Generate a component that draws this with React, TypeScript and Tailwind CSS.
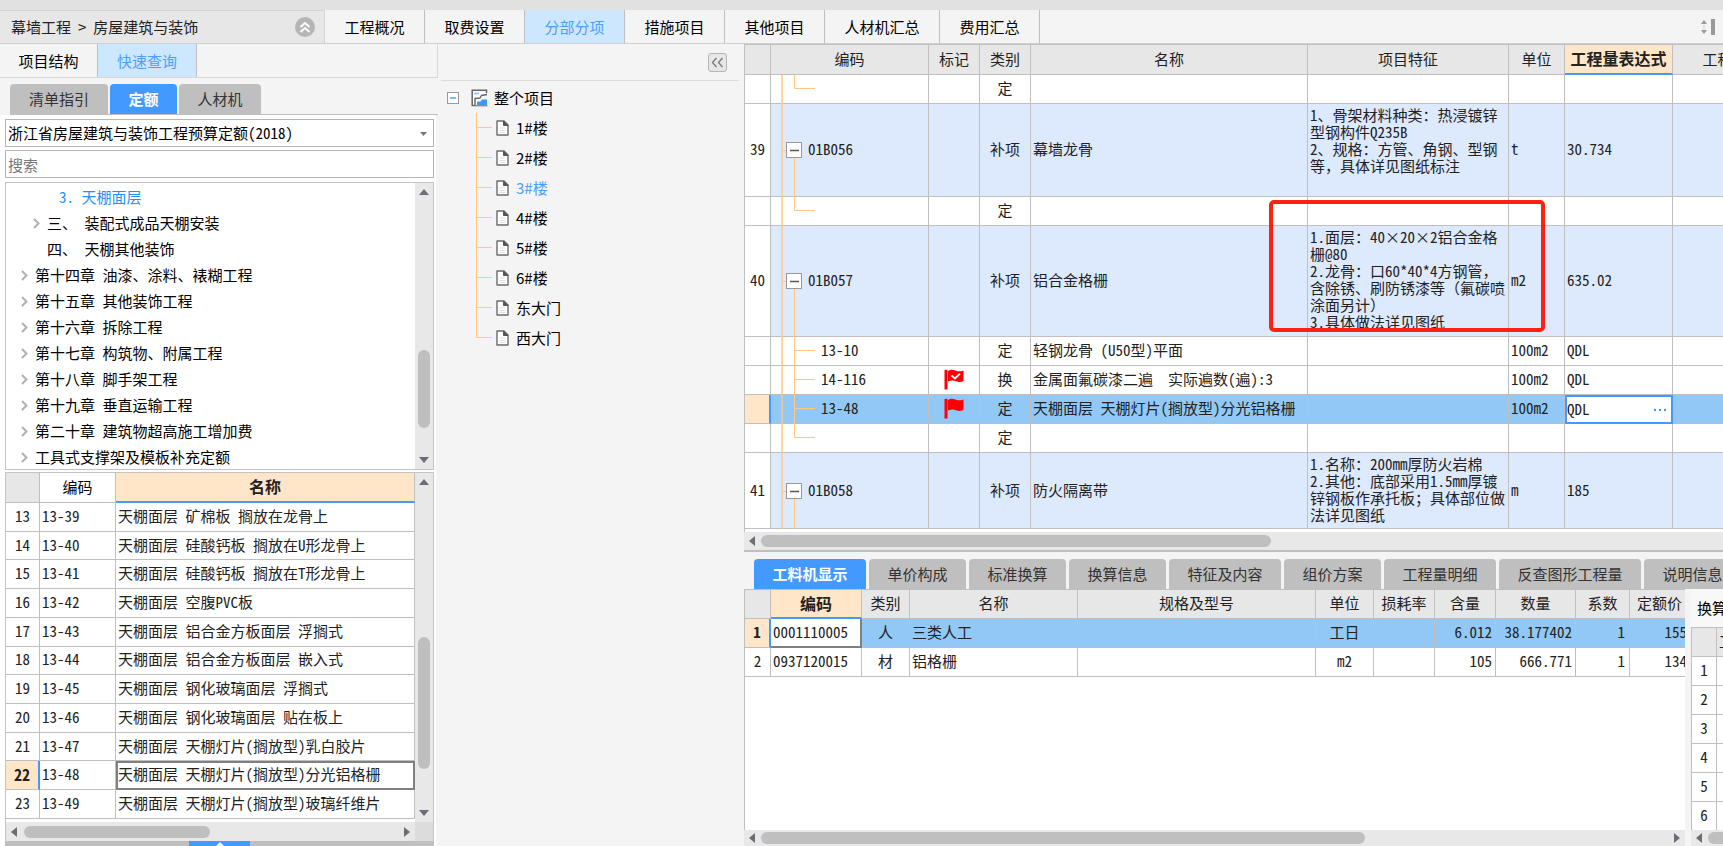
import React, { useState } from 'react';

const TOP_TABS = [
  { label: '工程概况', width: 'w-[100px]' },
  { label: '取费设置', width: 'w-[100px]' },
  { label: '分部分项', width: 'w-[100px]' },
  { label: '措施项目', width: 'w-[100px]' },
  { label: '其他项目', width: 'w-[100px]' },
  { label: '人材机汇总', width: 'w-[115px]' },
  { label: '费用汇总', width: 'w-[100px]' },
];

const QUERY_TABS = [
  { label: '清单指引', width: 'w-[98px]' },
  { label: '定额', width: 'w-[67px]' },
  { label: '人材机', width: 'w-[82px]' },
];

const CHAPTERS = [
  { label: '3. 天棚面层', indent: 'pl-[53px]', arrow: false, active: true },
  { label: '三、 装配式成品天棚安装', indent: 'pl-[27px]', arrow: true },
  { label: '四、 天棚其他装饰', indent: 'pl-[41px]', arrow: false },
  { label: '第十四章 油漆、涂料、裱糊工程', indent: 'pl-[15px]', arrow: true },
  { label: '第十五章 其他装饰工程', indent: 'pl-[15px]', arrow: true },
  { label: '第十六章 拆除工程', indent: 'pl-[15px]', arrow: true },
  { label: '第十七章 构筑物、附属工程', indent: 'pl-[15px]', arrow: true },
  { label: '第十八章 脚手架工程', indent: 'pl-[15px]', arrow: true },
  { label: '第十九章 垂直运输工程', indent: 'pl-[15px]', arrow: true },
  { label: '第二十章 建筑物超高施工增加费', indent: 'pl-[15px]', arrow: true },
  { label: '工具式支撑架及模板补充定额', indent: 'pl-[15px]', arrow: true },
];

const QUOTAS = [
  { no: 13, code: '13-39', name: '天棚面层 矿棉板 搁放在龙骨上' },
  { no: 14, code: '13-40', name: '天棚面层 硅酸钙板 搁放在U形龙骨上' },
  { no: 15, code: '13-41', name: '天棚面层 硅酸钙板 搁放在T形龙骨上' },
  { no: 16, code: '13-42', name: '天棚面层 空腹PVC板' },
  { no: 17, code: '13-43', name: '天棚面层 铝合金方板面层 浮搁式' },
  { no: 18, code: '13-44', name: '天棚面层 铝合金方板面层 嵌入式' },
  { no: 19, code: '13-45', name: '天棚面层 钢化玻璃面层 浮搁式' },
  { no: 20, code: '13-46', name: '天棚面层 钢化玻璃面层 贴在板上' },
  { no: 21, code: '13-47', name: '天棚面层 天棚灯片(搁放型)乳白胶片' },
  { no: 22, code: '13-48', name: '天棚面层 天棚灯片(搁放型)分光铝格栅' },
  { no: 23, code: '13-49', name: '天棚面层 天棚灯片(搁放型)玻璃纤维片' },
];

const BUILDINGS = ['1#楼', '2#楼', '3#楼', '4#楼', '5#楼', '6#楼', '东大门', '西大门'];

type RowKind = 'group' | 'child' | 'last';

interface BillRow {
  kind: RowKind;
  height: number;
  no?: string;
  code?: string;
  flag?: 'plain' | 'check';
  type: string;
  name?: string;
  features?: string[];
  unit?: string;
  expr?: string;
  selected?: boolean;
}

const BILL_ROWS: BillRow[] = [
  { kind: 'last', height: 29, type: '定' },
  {
    kind: 'group', height: 93, no: '39', code: '01B056', type: '补项', name: '幕墙龙骨', unit: 't', expr: '30.734',
    features: ['1、骨架材料种类：热浸镀锌', '型钢构件Q235B', '2、规格：方管、角钢、型钢', '等，具体详见图纸标注'],
  },
  { kind: 'last', height: 29, type: '定' },
  {
    kind: 'group', height: 111, no: '40', code: '01B057', type: '补项', name: '铝合金格栅', unit: 'm2', expr: '635.02',
    features: ['1.面层：40×20×2铝合金格', '栅@80', '2.龙骨：口60*40*4方钢管，', '含除锈、刷防锈漆等（氟碳喷', '涂面另计）', '3.具体做法详见图纸'],
  },
  { kind: 'child', height: 29, code: '13-10', type: '定', name: '轻钢龙骨 (U50型)平面', unit: '100m2', expr: 'QDL' },
  { kind: 'child', height: 29, code: '14-116', flag: 'check', type: '换', name: '金属面氟碳漆二遍  实际遍数(遍):3', unit: '100m2', expr: 'QDL' },
  { kind: 'child', height: 29, code: '13-48', flag: 'plain', type: '定', name: '天棚面层 天棚灯片(搁放型)分光铝格栅', unit: '100m2', expr: 'QDL', selected: true },
  { kind: 'last', height: 29, type: '定' },
  {
    kind: 'group', height: 76, no: '41', code: '01B058', type: '补项', name: '防火隔离带', unit: 'm', expr: '185',
    features: ['1.名称：200mm厚防火岩棉', '2.其他：底部采用1.5mm厚镀', '锌钢板作承托板；具体部位做', '法详见图纸'],
  },
];

const DETAIL_TABS = [
  { label: '工料机显示', width: 'w-[112px]' },
  { label: '单价构成', width: 'w-[97px]' },
  { label: '标准换算', width: 'w-[97px]' },
  { label: '换算信息', width: 'w-[97px]' },
  { label: '特征及内容', width: 'w-[112px]' },
  { label: '组价方案', width: 'w-[97px]' },
  { label: '工程量明细', width: 'w-[112px]' },
  { label: '反查图形工程量', width: 'w-[142px]' },
  { label: '说明信息', width: 'w-[97px]' },
];

const RESOURCES = [
  { no: '1', code: '0001110005', type: '人', name: '三类人工', unit: '工日', content: '6.012', amount: '38.177402', factor: '1', price: '155' },
  { no: '2', code: '0937120015', type: '材', name: '铝格栅', unit: 'm2', content: '105', amount: '666.771', factor: '1', price: '134' },
];

const HEAD = 'border-r border-b border-[#bfbfbf] bg-[#e7e7e7] font-normal p-0 pb-[2px] text-center whitespace-nowrap';
const HEAD_ACTIVE = 'border-r border-r-[#bfbfbf] border-b-2 border-b-[#4499ff] bg-[#ffe6c8] font-bold text-base leading-5 p-0 pb-[2px] text-center whitespace-nowrap';
const CELL = 'border-r border-b border-[#bfbfbf] p-0 pb-[2px] whitespace-pre overflow-hidden';

const Arrow: React.FC<{ dir: 'up' | 'down' | 'left' | 'right' }> = ({ dir }) => {
  const points = {
    up: '0,6 5,0 10,6',
    down: '0,0 5,6 10,0',
    left: '6,0 0,5 6,10',
    right: '0,0 6,5 0,10',
  };
  const vertical = dir === 'up' || dir === 'down';
  return (
    <svg width={vertical ? 10 : 6} height={vertical ? 6 : 10} className="shrink-0" aria-hidden="true">
      <polygon points={points[dir]} fill="#6d6d75" />
    </svg>
  );
};

const VScroll: React.FC<{ thumb: string }> = ({ thumb }) => (
  <div className="w-[18px] shrink-0 bg-[#e8e8e8] flex flex-col items-center justify-between py-[6px]">
    <Arrow dir="up" />
    <div className="flex-1 w-3">
      <div className={`rounded-full bg-[#bfbfbf] ${thumb}`} />
    </div>
    <Arrow dir="down" />
  </div>
);

const HScroll: React.FC<{ thumb: string; end?: boolean; className?: string }> = ({ thumb, end = true, className = '' }) => (
  <div className={`bg-[#e8e8e8] flex items-center px-[5px] gap-[6px] overflow-hidden ${className}`}>
    <Arrow dir="left" />
    <div className="flex-1 min-w-0">
      <div className={`h-3 rounded-full bg-[#bfbfbf] ${thumb}`} />
    </div>
    {end && <Arrow dir="right" />}
  </div>
);

const DocIcon = () => (
  <svg width="13" height="16" viewBox="0 0 13 16" className="shrink-0" aria-hidden="true">
    <path d="M1 1h7l4 4v10H1z" fill="#fff" stroke="#6b6b6b" strokeWidth="1.4" strokeLinejoin="round" />
    <path d="M7.5 1v4.5H12z" fill="#555" stroke="#555" strokeWidth="1" strokeLinejoin="round" />
    <path d="M3.5 8h6M3.5 10.5h6M3.5 12.5h6" stroke="#ddd" />
  </svg>
);

const ProjectIcon = () => (
  <svg width="17" height="18" viewBox="0 0 17 18" className="shrink-0" aria-hidden="true">
    <path d="M15.500 4V1.200H1.200V16.500H4" fill="#fff" stroke="#666" strokeWidth="1.5" />
    <path d="M3 4.500h5" stroke="#9cc8ff" strokeWidth="2" />
    <path d="M4 16.500V9.500l5-.5 1.500-2.500 5.500-1" fill="none" stroke="#666" strokeWidth="1.4" />
    <path d="M6 16v-3.500h3.500l1.500-2h5V16z" fill="#3d96ff" />
    <path d="M4 16.800h12.500" stroke="#666" strokeWidth="1" />
  </svg>
);

const FlagIcon: React.FC<{ checked: boolean }> = ({ checked }) => (
  <svg width="20" height="21" viewBox="0 0 20 21" className="mx-auto" aria-hidden="true">
    <path d="M0.500 1.500c0-1 3-1 3 0V20.500H0.500z" fill="#fb0007" />
    <path d="M4 2c3-2 5-1.500 8-.3 2.500 1 5 .8 7.500-.2V12c-3 1.500-5 1.200-7.500.2-2.500-1-5-1-8 .4z" fill="#fb0007" />
    {checked && <path d="M7.500 6.500l3.500 3 5-4.800" fill="none" stroke="#fff" strokeWidth="1.800" />}
  </svg>
);

// connector lines of the bill tree, drawn row by row
const Branch: React.FC<{ kind: RowKind; height: number }> = ({ kind, height }) => {
  const mid = Math.floor(height / 2);
  return (
    <svg width={kind === 'group' ? 37 : 50} height={height - 1} className="shrink-0 overflow-visible" aria-hidden="true">
      <g stroke="#ffc982" fill="none">
        <path d={`M11 0V${height}`} strokeWidth="1.500" />
        {kind === 'group' && <path d={`M11 ${mid + 0.5}H16M23.500 ${mid + 8}V${height}`} />}
        {kind === 'child' && <path d={`M23.500 0V${height}M23.500 ${mid - 0.5}H44`} />}
        {kind === 'last' && <path d={`M23.500 0V${mid - 0.5}H44`} />}
      </g>
      {kind === 'group' && (
        <g>
          <rect x="15.500" y={mid - 7.5} width="15" height="15" fill="#fff" stroke="#999" />
          <path d={`M19 ${mid + 0.5}h9`} stroke="#555" strokeWidth="1.500" />
        </g>
      )}
    </svg>
  );
};

// letters and digits are half width here, full-width punctuation keeps its own width
const FeatureText: React.FC<{ lines: string[] }> = ({ lines }) => (
  <>
    {lines.join('\n').split(/([，（）])/).map((part, index) =>
      index % 2 === 1 ? <span key={index} className="[font-feature-settings:normal]">{part}</span> : part
    )}
  </>
);

const TopBar = () => {
  const [active, setActive] = useState('分部分项');
  return (
    <header className="flex h-[34px] shrink-0 bg-[#f4f4f4] border-b border-[#cfcfcf]">
      <div className="w-[325px] shrink-0 bg-[#e7e7e7] border-t border-r border-[#d4d4d4] flex items-center justify-between pl-[11px] pr-[9px]">
        <nav className="flex gap-[7px] text-[#222]">
          <span>幕墙工程</span>
          <span>&gt;</span>
          <span>房屋建筑与装饰</span>
        </nav>
        <button aria-label="收起" className="size-5 rounded-full bg-[#b5b5b5] flex items-center justify-center">
          <svg width="12" height="12" viewBox="0 0 12 12" fill="none" stroke="#fff" strokeWidth="1.800">
            <path d="M1.500 6l4.500-4 4.500 4M1.500 11l4.500-4 4.500 4" />
          </svg>
        </button>
      </div>
      <div className="flex">
        {TOP_TABS.map(tab => (
          <button
            key={tab.label}
            onClick={() => setActive(tab.label)}
            className={`${tab.width} border-r border-[#bfbfbf] ${active === tab.label ? 'bg-[#cce7ff] text-[#4d9dff]' : 'text-black'}`}
          >
            {tab.label}
          </button>
        ))}
      </div>
      <div className="ml-auto pr-2 flex items-center gap-1" aria-hidden="true">
        <svg width="6" height="16" viewBox="0 0 6 16" fill="#999">
          <path d="M0 5l3-4 3 4zM0 11l3 4 3-4z" />
          <path d="M2.500 6h1v4h-1z" fill="#ccc" />
        </svg>
        <span className="w-1 h-4 bg-[#999]" />
      </div>
    </header>
  );
};

const QueryPanel = () => {
  const [tab, setTab] = useState('定额');
  return (
    <aside className="w-[438px] shrink-0 flex flex-col bg-[#f4f4f4]">
      <div className="flex h-[34px] shrink-0 border-r border-b border-[#d8d8d8]">
        <button className="w-[98px] border-r border-[#bfbfbf] text-black">项目结构</button>
        <button className="w-[99px] border-r border-[#bfbfbf] bg-[#cce7ff] text-[#4d9dff]">快速查询</button>
      </div>
      <div className="flex gap-[2px] ml-[10px] pt-[6px] border-b border-[#bfbfbf] shrink-0">
        {QUERY_TABS.map(item => (
          <button
            key={item.label}
            onClick={() => setTab(item.label)}
            className={`h-[30px] rounded-t-sm ${item.width} ${tab === item.label ? 'bg-[#4499ff] text-white font-bold' : 'bg-[#bfbfbf] text-[#333]'}`}
          >
            {item.label}
          </button>
        ))}
      </div>

      <div className="flex-1 min-h-0 bg-white mr-[2px] pl-[5px] pr-[2px] pt-[4px] flex flex-col [font-feature-settings:'hwid']">
        <div className="relative h-[28px] shrink-0 mb-[3px]">
          <select aria-label="定额库" className="appearance-none w-full h-full border border-[#b5b5b5] bg-white px-[2px] text-black">
            <option>浙江省房屋建筑与装饰工程预算定额(2018)</option>
          </select>
          <svg width="7" height="4" className="absolute right-[7px] top-[13px] pointer-events-none" aria-hidden="true">
            <polygon points="0,0 7,0 3.500,4" fill="#777" />
          </svg>
        </div>
        <input
          aria-label="搜索"
          placeholder="搜索"
          className="h-[28px] shrink-0 border border-[#b5b5b5] bg-white px-[2px] mb-[4px] placeholder:text-[#777]"
        />

        <div className="h-[288px] shrink-0 border border-[#c4c4c4] mb-[2px] flex">
          <ul className="flex-1 overflow-hidden pt-px text-black">
            {CHAPTERS.map(item => (
              <li key={item.label} className={`h-[26px] flex items-center gap-[7px] whitespace-pre ${item.indent} ${item.active ? 'text-[#1e90ff]' : ''}`}>
                {item.arrow && (
                  <svg width="7" height="11" viewBox="0 0 7 11" fill="none" stroke="#b0b0b0" strokeWidth="2" aria-hidden="true">
                    <path d="M1 1l4.500 4.500L1 10" />
                  </svg>
                )}
                {item.label}
              </li>
            ))}
          </ul>
          <VScroll thumb="h-[78px] mt-[155px]" />
        </div>

        <div className="border border-b-0 border-[#c4c4c4] shrink-0 flex h-[350px]">
          <div className="flex-1 overflow-hidden">
            <table className="table-fixed border-separate border-spacing-0 w-full h-[346px] text-[#222]">
              <colgroup>
                <col className="w-[34px]" />
                <col className="w-[76px]" />
                <col />
              </colgroup>
              <thead>
                <tr className="h-[30px]">
                  <th className={HEAD} />
                  <th className="border-r border-b border-[#bfbfbf] font-normal p-0 pb-[2px] text-black">编码</th>
                  <th className={HEAD_ACTIVE}>名称</th>
                </tr>
              </thead>
              <tbody>
                {QUOTAS.map(q => {
                  const current = q.no === 22;
                  return (
                    <tr key={q.no}>
                      <td className={`${CELL} text-center ${current ? 'bg-[#ffe6c8] font-bold text-base leading-5 border-r-2 border-r-[#4499ff]' : ''}`}>{q.no}</td>
                      <td className={`${CELL} pl-[2px]`}>{q.code}</td>
                      <td className={`${CELL} pl-[2px] ${current ? 'outline-2 -outline-offset-2 outline-[#808080]' : ''}`}>{q.name}</td>
                    </tr>
                  );
                })}
              </tbody>
            </table>
          </div>
          <VScroll thumb="h-[132px] mt-[152px]" />
        </div>
        <div className="flex shrink-0 border-x border-[#c4c4c4]">
          <HScroll thumb="w-[186px] ml-px" className="flex-1 h-[19px]" />
          <div className="w-[18px] bg-[#dcdcdc]" />
        </div>
        <div className="flex-1 bg-[#bfbfbf] pl-[184px]">
          <button aria-label="展开" className="w-[61px] h-full bg-[#4499ff] flex justify-center overflow-hidden">
            <svg width="8" height="5" viewBox="0 0 8 5" aria-hidden="true">
              <path d="M0 5l4-4 4 4z" fill="#fff" />
            </svg>
          </button>
        </div>
      </div>
    </aside>
  );
};

const ProjectTree = () => {
  const [current, setCurrent] = useState('3#楼');
  return (
    <aside className="w-[306px] shrink-0 bg-[#f4f4f4] pl-[3px] pr-[5px]">
      <div className="h-[37px] border-b border-[#dcdcdc] flex items-center justify-end pr-[12px]">
        <button aria-label="折叠" className="size-[19px] border border-[#b5b5b5] rounded-[3px] bg-[#e7e7e7] flex items-center justify-center">
          <svg width="13" height="11" viewBox="0 0 13 11" fill="none" stroke="#777" strokeWidth="1.300">
            <path d="M5.500 1L1.500 5.500l4 4.500M11.500 1L7.500 5.500l4 4.500" />
          </svg>
        </button>
      </div>
      <div className="flex items-center h-[30px] mt-[2px] pl-[6px] text-black">
        <svg width="12" height="12" className="mr-[12px]" aria-hidden="true">
          <rect x="0.500" y="0.500" width="11" height="11" fill="#fff" stroke="#999" />
          <path d="M3 6h6" stroke="#45a5e8" strokeWidth="1.400" />
        </svg>
        <ProjectIcon />
        <span className="ml-[6px]">整个项目</span>
      </div>
      <ul className="pl-[35px]">
        {BUILDINGS.map((name, index) => (
          <li key={name} className="h-[30px] flex items-center">
            <svg width="20" height="30" className="shrink-0" fill="none" stroke="#ffc982" aria-hidden="true">
              <path d={index === BUILDINGS.length - 1 ? 'M0.500 0V14.500H16' : 'M0.500 0V30M0.500 14.500H16'} />
            </svg>
            <button onClick={() => setCurrent(name)} className={`flex items-center gap-[7px] ${current === name ? 'text-[#4d9dff]' : 'text-black'}`}>
              <DocIcon />
              {name}
            </button>
          </li>
        ))}
      </ul>
    </aside>
  );
};

const BillTable = () => (
  <section className="relative overflow-hidden border-t border-l border-[#bfbfbf] bg-white shrink-0 pb-[3px] [font-feature-settings:'hwid']">
    <table className="table-fixed border-separate border-spacing-0 w-[1033px] text-[#222]">
      <colgroup>
        <col className="w-[26px]" />
        <col className="w-[158px]" />
        <col className="w-[51px]" />
        <col className="w-[51px]" />
        <col className="w-[277px]" />
        <col className="w-[201px]" />
        <col className="w-[56px]" />
        <col className="w-[108px]" />
        <col className="w-[105px]" />
      </colgroup>
      <thead>
        <tr className="h-[30px]">
          <th className={HEAD} />
          <th className={HEAD}>编码</th>
          <th className={HEAD}>标记</th>
          <th className={HEAD}>类别</th>
          <th className={HEAD}>名称</th>
          <th className={HEAD}>项目特征</th>
          <th className={HEAD}>单位</th>
          <th className={HEAD_ACTIVE}>工程量表达式</th>
          <th className={HEAD}>工程量</th>
        </tr>
      </thead>
      <tbody>
        {BILL_ROWS.map((row, index) => {
          const bg = row.selected ? 'bg-[#91c8f6]' : row.kind === 'group' ? 'bg-[#dde9fd]' : 'bg-white';
          return (
            <tr key={index} style={{ height: row.height }} className={bg}>
              <td className={`${CELL} text-center ${row.selected ? 'bg-[#ffe6c8] border-r-2 border-r-[#4499ff]' : 'bg-white'}`}>{row.no}</td>
              <td className="border-r border-b border-[#bfbfbf] p-0">
                <div className="flex items-center">
                  <Branch kind={row.kind} height={row.height} />
                  <span className="pb-[2px]">{row.code}</span>
                </div>
              </td>
              <td className={CELL}>{row.flag && <FlagIcon checked={row.flag === 'check'} />}</td>
              <td className={`${CELL} text-center`}>{row.type}</td>
              <td className={`${CELL} pl-[2px]`}>{row.name}</td>
              <td className={`${CELL} pl-[2px] align-top`}>
                {row.features && (
                  <div className="pt-[2px] leading-[17px] overflow-hidden" style={{ height: row.height - 5 }}>
                    <FeatureText lines={row.features} />
                  </div>
                )}
              </td>
              <td className={`${CELL} pl-[2px]`}>{row.unit}</td>
              {row.selected ? (
                <td className="p-0">
                  <div className="flex h-[29px] border-2 border-[#4499ff] bg-white pr-[5px]">
                    <input aria-label="工程量表达式" defaultValue={row.expr} className="flex-1 min-w-0 pb-[2px] outline-none" />
                    <button aria-label="编辑表达式" className="flex items-center gap-[3px]">
                      <span className="size-[2px] bg-[#4499dd]" />
                      <span className="size-[2px] bg-[#4499dd]" />
                      <span className="size-[2px] bg-[#4499dd]" />
                    </button>
                  </div>
                </td>
              ) : (
                <td className={`${CELL} pl-[2px]`}>{row.expr}</td>
              )}
              <td className={CELL} />
            </tr>
          );
        })}
      </tbody>
    </table>
    {/* highlight around the feature text of item 40 */}
    <div className="absolute left-[524px] top-[155px] w-[276px] h-[132px] border-4 border-[#ff2014] rounded-[5px] pointer-events-none" />
  </section>
);

const ResourceTable = () => (
  <table className="table-fixed border-separate border-spacing-0 w-[945px] text-[#222]">
    <colgroup>
      <col className="w-[26px]" />
      <col className="w-[91px]" />
      <col className="w-[48px]" />
      <col className="w-[168px]" />
      <col className="w-[238px]" />
      <col className="w-[58px]" />
      <col className="w-[61px]" />
      <col className="w-[61px]" />
      <col className="w-[80px]" />
      <col className="w-[54px]" />
      <col className="w-[60px]" />
    </colgroup>
    <thead>
      <tr className="h-[29px]">
        <th className={HEAD} />
        <th className={HEAD_ACTIVE}>编码</th>
        <th className={HEAD}>类别</th>
        <th className={HEAD}>名称</th>
        <th className={HEAD}>规格及型号</th>
        <th className={HEAD}>单位</th>
        <th className={HEAD}>损耗率</th>
        <th className={HEAD}>含量</th>
        <th className={HEAD}>数量</th>
        <th className={HEAD}>系数</th>
        <th className={HEAD}>定额价</th>
      </tr>
    </thead>
    <tbody>
      {RESOURCES.map((r, index) => {
        const current = index === 0;
        return (
          <tr key={r.no} className={`h-[29px] ${current ? 'bg-[#91c8f6]' : ''}`}>
            <td className={`${CELL} text-center ${current ? 'bg-[#ffe6c8] font-bold border-r-2 border-r-[#4499ff]' : ''}`}>{r.no}</td>
            <td className={`p-0 pb-[2px] pl-[2px] whitespace-pre ${current ? 'bg-white border-r-2 border-b-2 border-[#808080]' : 'border-r border-b border-[#bfbfbf]'}`}>{r.code}</td>
            <td className={`${CELL} text-center`}>{r.type}</td>
            <td className={`${CELL} pl-[2px]`}>{r.name}</td>
            <td className={CELL} />
            <td className={`${CELL} text-center`}>{r.unit}</td>
            <td className={CELL} />
            <td className={`${CELL} text-right pr-[3px]`}>{r.content}</td>
            <td className={`${CELL} text-right pr-[3px]`}>{r.amount}</td>
            <td className={`${CELL} text-right pr-[4px]`}>{r.factor}</td>
            <td className={`${CELL} text-right pr-[2px]`}>{r.price}</td>
          </tr>
        );
      })}
    </tbody>
  </table>
);

const ConversionPanel = () => (
  <div className="w-[32px] shrink-0 flex flex-col overflow-hidden">
    <div className="h-[38px] shrink-0 bg-[#f8f8f8] pl-[6px] flex items-center whitespace-nowrap text-black">换算列表</div>
    <div className="flex-1 min-h-0 overflow-hidden bg-white border-t border-l border-[#bfbfbf]">
      <table className="table-fixed border-separate border-spacing-0 w-[90px] text-[#222]">
        <colgroup>
          <col className="w-[25px]" />
          <col className="w-[65px]" />
        </colgroup>
        <thead>
          <tr className="h-[29px]">
            <th className={HEAD} />
            <th className={`${HEAD} text-left pl-[2px]`}>工</th>
          </tr>
        </thead>
        <tbody>
          {[1, 2, 3, 4, 5, 6].map(n => (
            <tr key={n} className="h-[29px]">
              <td className={`${CELL} text-center`}>{n}</td>
              <td className={CELL} />
            </tr>
          ))}
        </tbody>
      </table>
    </div>
    <HScroll thumb="w-[60px]" end={false} className="h-[16px] shrink-0" />
  </div>
);

const DetailPanel = () => {
  const [tab, setTab] = useState('工料机显示');
  return (
    <section className="flex-1 min-h-0 flex flex-col bg-[#f4f4f4]">
      <div className="flex gap-[3px] pl-[10px] pt-[7px] overflow-hidden shrink-0">
        {DETAIL_TABS.map(item => (
          <button
            key={item.label}
            onClick={() => setTab(item.label)}
            className={`h-[30px] shrink-0 rounded-t-sm ${item.width} ${tab === item.label ? 'bg-[#4499ff] text-white font-bold' : 'bg-[#bfbfbf] text-[#333]'}`}
          >
            {item.label}
          </button>
        ))}
      </div>
      <div className="flex flex-1 min-h-0 gap-[6px] [font-feature-settings:'hwid']">
        <div className="flex-1 min-w-0 flex flex-col">
          <div className="flex-1 min-h-0 overflow-hidden bg-white border-t border-l border-[#bfbfbf]">
            <ResourceTable />
          </div>
          <HScroll thumb="w-[604px]" className="h-[16px] shrink-0" />
        </div>
        <ConversionPanel />
      </div>
    </section>
  );
};

const App: React.FC = () => {
  return (
    <div className="h-screen flex flex-col overflow-hidden bg-[#f4f4f4] text-[15px] leading-5 font-['Noto_Sans_CJK_SC',sans-serif]">
      <div className="h-[10px] shrink-0 bg-[#e1e1e1]" />
      <TopBar />
      <div className="flex flex-1 min-h-0">
        <QueryPanel />
        <ProjectTree />
        <main className="flex-1 min-w-0 flex flex-col">
          <BillTable />
          <HScroll thumb="w-[510px]" end={false} className="h-[20px] shrink-0 border-b-2 border-[#bfbfbf]" />
          <DetailPanel />
        </main>
      </div>
    </div>
  );
};

export default App;
